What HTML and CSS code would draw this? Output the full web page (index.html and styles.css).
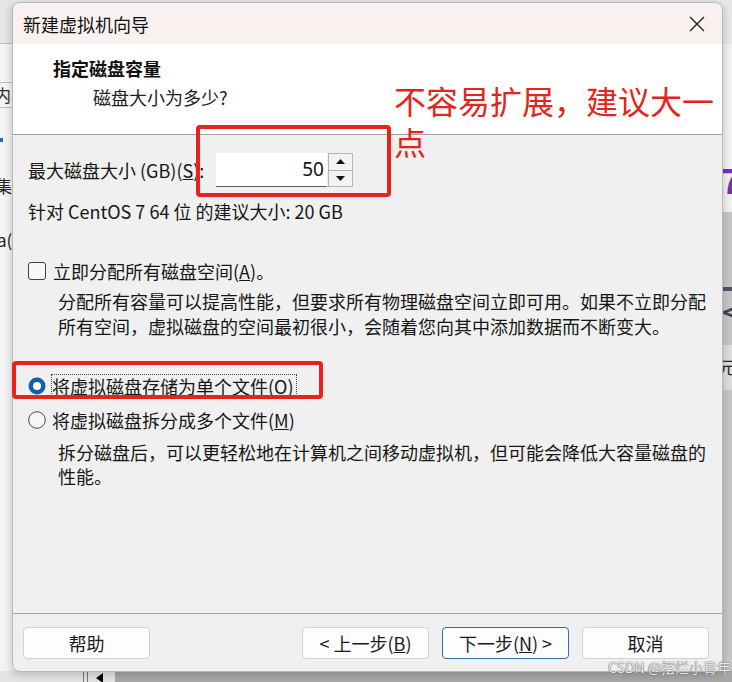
FILE: index.html
```html
<!DOCTYPE html>
<html lang="zh-CN">
<head>
<meta charset="utf-8">
<title>新建虚拟机向导</title>
<link rel="stylesheet" href="styles.css">
</head>
<body>
<div class="desktop">
  <div class="bg-left">
    <span class="frag f-nei">内容</span>
    <span class="frag f-dot"></span>
    <span class="frag f-ji">集</span>
    <span class="frag f-a">a(</span>
  </div>
  <div class="bg-right">
    <span class="frag f-seven">7</span>
    <span class="frag f-dash"></span>
    <span class="frag f-arrow">&lt;</span>
    <span class="frag f-yuan">元</span>
  </div>
  <div class="bg-bottom">
    <span class="frag f-line1"></span>
    <span class="frag f-line2"></span>
    <span class="frag f-tri"></span>
  </div>

  <div class="dialog">
    <div class="titlebar">
      <span class="title">新建虚拟机向导</span>
      <svg class="close" width="16" height="16" viewBox="0 0 16 16"><path d="M1 1L15 15M15 1L1 15" stroke="#1a1a1a" stroke-width="1.3" fill="none"/></svg>
    </div>
    <div class="header">
      <div class="h-title">指定磁盘容量</div>
      <div class="h-sub">磁盘大小为多少?</div>
    </div>
    <div class="content">
      <div class="size-row">
        <span class="size-label">最大磁盘大小 (GB)(<u>S</u>):</span>
        <div class="spin-input">50</div>
        <div class="spin-btns">
          <div class="spin-btn"><svg width="9" height="5" viewBox="0 0 9 5"><path d="M0 5L4.5 0L9 5Z" fill="#111"/></svg></div>
          <div class="spin-btn"><svg width="9" height="5" viewBox="0 0 9 5"><path d="M0 0L4.5 5L9 0Z" fill="#111"/></svg></div>
        </div>
      </div>
      <div class="rec">针对 CentOS 7 64 位 的建议大小: 20 GB</div>
      <div class="option check-row">
        <span class="checkbox"></span>
        <span class="opt-label">立即分配所有磁盘空间(<u>A</u>)。</span>
      </div>
      <p class="desc desc-1">分配所有容量可以提高性能，但要求所有物理磁盘空间立即可用。如果不立即分配<br>所有空间，虚拟磁盘的空间最初很小，会随着您向其中添加数据而不断变大。</p>
      <div class="option radio-row radio-1">
        <svg class="radio" width="18" height="18" viewBox="0 0 18 18"><circle cx="9" cy="9" r="8.5" fill="#0f5fb3"/><circle cx="9" cy="9" r="4" fill="#fff"/></svg>
        <span class="opt-label focus">将虚拟磁盘存储为单个文件(<u>O</u>)</span>
      </div>
      <div class="option radio-row radio-2">
        <svg class="radio" width="18" height="18" viewBox="0 0 18 18"><circle cx="9" cy="9" r="8.3" fill="#f7f7f7" stroke="#4a4a4a" stroke-width="1"/></svg>
        <span class="opt-label">将虚拟磁盘拆分成多个文件(<u>M</u>)</span>
      </div>
      <p class="desc desc-2">拆分磁盘后，可以更轻松地在计算机之间移动虚拟机，但可能会降低大容量磁盘的<br>性能。</p>
    </div>
    <div class="footer">
      <button class="btn">帮助</button>
      <button class="btn btn-back">&lt; 上一步(<u>B</u>)</button>
      <button class="btn btn-next">下一步(<u>N</u>) &gt;</button>
      <button class="btn">取消</button>
    </div>
  </div>

  <div class="mark mark-size"></div>
  <div class="mark mark-single"></div>
  <div class="note">不容易扩展，建议大一<br>点</div>
  <div class="watermark">CSDN @摆烂小青年</div>
</div>
</body>
</html>
```

FILE: styles.css
```css
* { box-sizing: border-box; }
html, body { margin: 0; padding: 0; }
body {
  width: 732px;
  height: 682px;
  overflow: hidden;
  font-family: "Noto Sans CJK SC", "Noto Sans", sans-serif;
  color: #161616;
}
.desktop {
  position: relative;
  width: 732px;
  height: 682px;
  padding: 2px 0 0 12px;
  background: #e9e9e9;
}

/* background desktop fragments */
.bg-left {
  position: absolute;
  left: 0; top: 0;
  width: 14px; height: 672px;
  background: linear-gradient(#e6e6e6 0 43px, #bdbdbd 43px 44px, #f4f4f4 44px);
  overflow: hidden;
}
.bg-right {
  position: absolute;
  right: 0; top: 0;
  width: 12px; height: 682px;
  background: linear-gradient(#e8e8e8 0 44px, #f2f2f2 44px 212px, #c8c8c8 212px 345px, #dedede 345px 390px, #c8c8c8 390px);
  overflow: hidden;
}
.bg-bottom {
  position: absolute;
  left: 0; bottom: 0;
  width: 732px; height: 11px;
  background: linear-gradient(90deg, #e4e4e4 0 115px, #a7a7a7 115px);
}
.frag { position: absolute; display: block; white-space: nowrap; }
.f-nei { left: -6px; top: 82px; font-size: 17px; line-height: 24px; color: #333; border-top: 1px solid #bbb; border-bottom: 1px solid #bbb; padding-right: 4px; }
.f-dot { left: 0; top: 138px; width: 3px; height: 4px; background: #2a6bc0; }
.f-ji { left: -5px; top: 174px; font-size: 17px; line-height: 24px; color: #222; }
.f-a { left: -3px; top: 228px; font-size: 17px; line-height: 24px; color: #222; }
.f-seven { left: 1px; top: 160px; font-size: 34px; line-height: 40px; font-weight: 700; color: #7434b0; }
.f-dash { left: 2px; top: 287px; width: 10px; height: 4px; background: #4c5866; }
.f-arrow { left: 2px; top: 296px; font-size: 26px; line-height: 30px; font-weight: 700; color: #3b4654; }
.f-yuan { left: -2px; top: 355px; font-size: 17px; line-height: 24px; color: #222; }
.f-line1 { left: 83px; top: 0; width: 1px; height: 11px; background: #777; }
.f-line2 { left: 87px; top: 0; width: 1px; height: 11px; background: #777; }
.f-tri { left: 96px; top: 2px; width: 0; height: 0; border-right: 7px solid #000; border-top: 5px solid transparent; border-bottom: 5px solid transparent; }

/* dialog */
.dialog {
  position: relative;
  width: 711px;
  height: 670px;
  border: 1px solid #b9b9b9;
  border-radius: 8px;
  overflow: hidden;
  background: #f0f0f0;
  box-shadow: 0 2px 10px rgba(0,0,0,0.22);
  display: flex;
  flex-direction: column;
}
.titlebar {
  height: 41px;
  flex: none;
  background: #f8f1ef;
  display: flex;
  align-items: center;
  justify-content: space-between;
  padding: 0 17px 0 10px;
}
.title { font-size: 18px; line-height: 24px; color: #111; }
.close { display: block; }

.header {
  height: 91px;
  flex: none;
  background: #fff;
  border-bottom: 1px solid #a3a3a3;
  padding: 12px 0 0 40px;
}
.h-title { font-size: 18px; line-height: 24px; font-weight: 700; color: #111; }
.h-sub { font-size: 18px; line-height: 24px; margin-top: 5px; padding-left: 40px; color: #222; }

.content {
  flex: 1;
  padding: 18px 0 0 15px;
  font-size: 18px;
}
.size-row { display: flex; align-items: center; height: 34px; }
.size-label { width: 188px; line-height: 24px; }
.spin-input {
  width: 111px;
  height: 34px;
  background: #fff;
  border-bottom: 1px solid #5a5a5a;
  text-align: right;
  padding-right: 3px;
  line-height: 33px;
  font-family: "Noto Sans", sans-serif;
  font-size: 19px;
  color: #111;
}
.spin-btns {
  width: 25px;
  height: 34px;
  margin-left: 1px;
  border: 1px solid #b5b5b5;
  display: flex;
  flex-direction: column;
  background: #f3f3f3;
}
.spin-btn { flex: 1; display: flex; align-items: center; justify-content: center; }
.spin-btn + .spin-btn { border-top: 1px solid #b5b5b5; }

.rec { margin-top: 12px; line-height: 24px; }

.option { display: flex; align-items: center; height: 24px; }
.opt-label { line-height: 22px; }
.check-row { margin-top: 36px; gap: 7px; }
.checkbox {
  width: 18px; height: 18px;
  border: 1px solid #3f3f3f;
  border-radius: 3px;
  background: #f7f7f7;
  flex: none;
}
.desc { margin: 0; padding-left: 30px; }
.desc-1 { margin-top: 6px; line-height: 25px; }
.radio-row { gap: 6px; }
.radio { display: block; flex: none; }
.radio-1 { margin-top: 35px; }
.radio-2 { margin-top: 10px; }
.focus { outline: 1px dotted #444; outline-offset: 0; padding-right: 2px; }
.desc-2 { margin-top: 8px; line-height: 24px; }

.footer {
  flex: none;
  border-top: 1px solid #a3a3a3;
  padding: 13px 13px 12px 10px;
  display: flex;
  gap: 13px;
}
.btn {
  width: 127px;
  height: 32px;
  border: 1px solid #d0d0d0;
  border-radius: 4px;
  background: #fdfdfd;
  font-family: "Noto Sans CJK SC", "Noto Sans", sans-serif;
  font-size: 18px;
  line-height: 22px;
  color: #1a1a1a;
  padding: 0;
}
.btn-back { margin-left: auto; }
.btn-next { border-color: #2f6fae; }

/* annotations */
.mark {
  position: absolute;
  border: 4px solid #e8231b;
  border-radius: 4px;
}
.mark-size { left: 196px; top: 125px; width: 195px; height: 72px; }
.mark-single { left: 12px; top: 361px; width: 311px; height: 38px; }
.note {
  position: absolute;
  left: 394px;
  top: 80px;
  font-size: 32px;
  line-height: 41px;
  color: #e5241c;
  white-space: nowrap;
}
.watermark {
  position: absolute;
  left: 608px;
  top: 658px;
  font-size: 14px;
  line-height: 18px;
  color: rgba(255,255,255,0.9);
  text-shadow: 0 0 1px #555, 0 0 1px #555;
  white-space: nowrap;
}
```
